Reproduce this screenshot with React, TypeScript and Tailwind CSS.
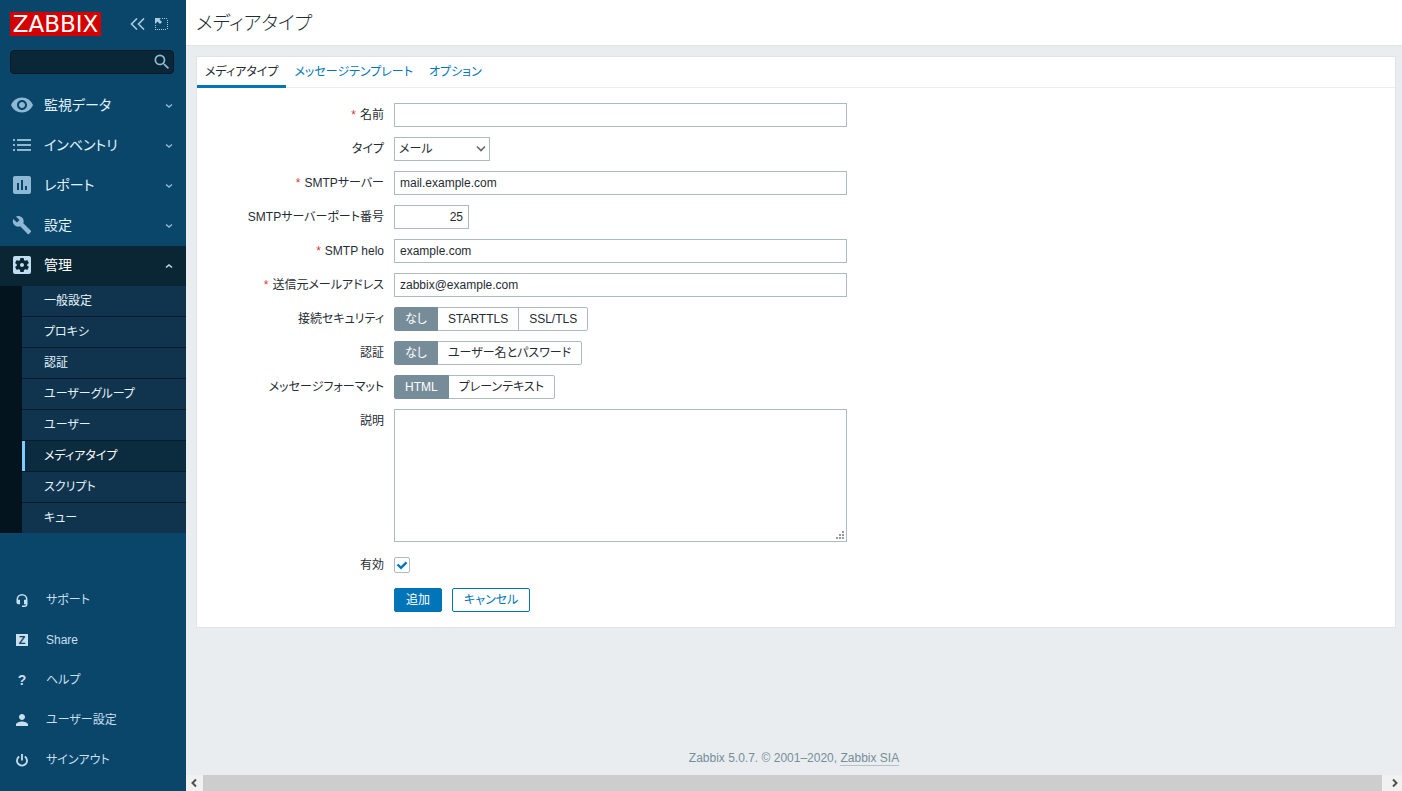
import { useState } from "react";
import type { ReactNode } from "react";
import clsx from "clsx";
import {
  MdAssessment,
  MdBuild,
  MdPerson,
  MdRemoveRedEye,
  MdSearch,
  MdSettingsApplications,
} from "react-icons/md";

const SUBMENU = [
  "一般設定",
  "プロキシ",
  "認証",
  "ユーザーグループ",
  "ユーザー",
  "メディアタイプ",
  "スクリプト",
  "キュー",
];

function ListIcon() {
  return (
    <svg width="18" height="12" viewBox="0 0 18 12" fill="currentColor">
      <path d="M0 0h2v2H0zM4 0h14v2H4zM0 5h2v2H0zM4 5h14v2H4zM0 10h2v2H0zM4 10h14v2H4z" />
    </svg>
  );
}

function HeadsetIcon() {
  return (
    <svg width="12" height="13" viewBox="0 0 12 13" fill="currentColor">
      <path d="M6 0a5.500 5.500 0 0 0-5.500 5.500V8.500A1.800 1.800 0 0 0 2.300 10.300H4V5.800H2V5.500a4 4 0 0 1 8 0v.3H8v4.500h2c-.2.8-.8 1.200-1.500 1.200H6V13h2.500a3 3 0 0 0 3-3V5.500A5.500 5.500 0 0 0 6 0z" />
    </svg>
  );
}

function PowerIcon() {
  return (
    <svg width="12" height="13" viewBox="0 0 12 13" fill="none" stroke="currentColor" strokeWidth="1.8">
      <path d="M6 0v6.500M3.200 2.500a5 5 0 1 0 5.600 0" />
    </svg>
  );
}

function Chevron({ up = false }: { up?: boolean }) {
  return (
    <svg width="8" height="6" viewBox="0 0 8 6" fill="none" stroke="currentColor" strokeWidth="1.5">
      <path d={up ? "M1 4.500 4 2l3 2.500" : "M1 1.500 4 4l3-2.500"} />
    </svg>
  );
}

function MenuItem({ icon, label, open = false }: { icon: ReactNode; label: string; open?: boolean }) {
  return (
    <a
      href="#"
      className={clsx(
        "flex h-10 items-center pr-[13px] pb-0.5 text-sm",
        open ? "bg-[#0a2635] text-white" : "text-[#e3f3fd]",
      )}
    >
      <span className={clsx("flex w-11 justify-center", open ? "text-[#c0dcf0]" : "text-[#8eb8d4]")}>{icon}</span>
      <span className="flex-1">{label}</span>
      <span className={clsx("pt-0.5", open ? "text-[#c0dcf0]" : "text-[#8eb8d4]")}>
        <Chevron up={open} />
      </span>
    </a>
  );
}

function UserItem({ icon, label }: { icon: ReactNode; label: string }) {
  return (
    <a href="#" className="flex h-10 items-center text-[#c8dfee]">
      <span className="flex w-11 justify-center">{icon}</span>
      <span className="pl-0.5">{label}</span>
    </a>
  );
}

function Sidebar() {
  return (
    <aside className="flex w-[186px] shrink-0 flex-col bg-[#0a466a]">
      <div className="flex h-[50px] items-center justify-between pr-[18px] pb-0.5 pl-2.5">
        <a
          href="#"
          className="flex h-6 w-[91px] items-center justify-center bg-[#d40000] font-['DejaVu_Sans',sans-serif] text-[23px] leading-6 text-white"
        >
          ZABBIX
        </a>
        <div className="flex items-center gap-2.5 text-[#a9cce2]">
          <button type="button" aria-label="サイドバーを隠す">
            <svg width="15" height="12" viewBox="0 0 15 12" fill="none" stroke="currentColor" strokeWidth="1.6">
              <path d="M7 .5 1.500 6 7 11.500M14 .5 8.500 6l5.500 5.500" />
            </svg>
          </button>
          <button type="button" aria-label="全画面">
            <svg width="13" height="12" viewBox="0 0 13 12" fill="none" stroke="currentColor">
              <path d="M7 .5h6M12.500 2v10M.5 7v5M2 11.500h10" strokeDasharray="1 1" />
              <path d="M0 0h6L4.500 1.500l2.500 2.500-2 2-2.500-2.500L0 6z" fill="currentColor" stroke="none" />
            </svg>
          </button>
        </div>
      </div>
      <form className="mr-3 ml-2.5 flex h-6 rounded-sm border border-[#06192a] bg-[#0a2737]">
        <input type="text" aria-label="検索" className="min-w-0 flex-1 px-1 text-white outline-none" />
        <button type="button" aria-label="検索する" className="pr-px text-[#8eb8d4]">
          <MdSearch size={20} />
        </button>
      </form>
      <nav className="pt-3">
        <MenuItem icon={<MdRemoveRedEye size={24} />} label="監視データ" />
        <MenuItem icon={<ListIcon />} label="インベントリ" />
        <MenuItem icon={<MdAssessment size={24} />} label="レポート" />
        <MenuItem icon={<MdBuild size={20} />} label="設定" />
        <MenuItem icon={<MdSettingsApplications size={24} />} label="管理" open />
        <div className="bg-[#04141e] pl-[22px]">
          <ul className="bg-[#10344d]">
            {SUBMENU.map((label) => (
              <li key={label} className="border-b border-[#071c2b] last:border-b-0">
                <a
                  href="#"
                  className={clsx(
                    "flex h-[30px] items-center border-l-[3px] pl-[19px]",
                    label === "メディアタイプ"
                      ? "border-[#80ccff] bg-[#0b2b3e] text-white"
                      : "border-transparent text-[#e3f3fd]",
                  )}
                >
                  {label}
                </a>
              </li>
            ))}
          </ul>
        </div>
      </nav>
      <nav className="mt-auto pb-[11px]">
        <UserItem icon={<HeadsetIcon />} label="サポート" />
        <UserItem
          icon={
            <span className="h-3 w-3 bg-[#c8dfee] text-center text-[11px] leading-3 font-bold text-[#0a466a]">Z</span>
          }
          label="Share"
        />
        <UserItem icon={<span className="text-sm font-bold">?</span>} label="ヘルプ" />
        <UserItem icon={<MdPerson size={18} />} label="ユーザー設定" />
        <UserItem icon={<PowerIcon />} label="サインアウト" />
      </nav>
    </aside>
  );
}

function Row({
  label,
  htmlFor,
  required = false,
  children,
}: {
  label: string;
  htmlFor?: string;
  required?: boolean;
  children: ReactNode;
}) {
  return (
    <div className="flex gap-2.5">
      <label htmlFor={htmlFor} className="w-[187px] shrink-0 text-right leading-6">
        {required && <span className="mr-1 text-[#e33734]">*</span>}
        {label}
      </label>
      <div className="flex min-w-0 flex-1">{children}</div>
    </div>
  );
}

function TextField({ id, value = "" }: { id: string; value?: string }) {
  return (
    <input
      id={id}
      type="text"
      defaultValue={value}
      className="h-6 w-full max-w-[453px] border border-[#acbbc2] bg-white px-[5px] outline-none"
    />
  );
}

function Segmented({ name, options }: { name: string; options: string[] }) {
  const [selected, setSelected] = useState(options[0]);

  return (
    <div role="radiogroup" aria-label={name} className="flex h-6">
      {options.map((option) => (
        <label
          key={option}
          className={clsx(
            "relative -ml-px flex items-center border px-2.5 first:ml-0 first:rounded-l-xs last:rounded-r-xs",
            selected === option ? "z-1 border-[#768d99] bg-[#768d99] text-white" : "border-[#acbbc2]",
          )}
        >
          <input
            type="radio"
            name={name}
            checked={selected === option}
            onChange={() => setSelected(option)}
            className="sr-only"
          />
          {option}
        </label>
      ))}
    </div>
  );
}

function MediaTypeForm() {
  return (
    <form className="flex flex-col gap-2.5 py-[15px]">
      <Row label="名前" htmlFor="name" required>
        <TextField id="name" />
      </Row>
      <Row label="タイプ" htmlFor="type">
        <div className="relative">
          <select id="type" className="h-6 w-24 appearance-none border border-[#acbbc2] bg-white pl-1 outline-none">
            <option>メール</option>
          </select>
          <svg
            className="pointer-events-none absolute top-2 right-1"
            width="10"
            height="8"
            viewBox="0 0 10 8"
            fill="none"
            stroke="#666"
            strokeWidth="1.6"
          >
            <path d="M1 1.500 5 5.500l4-4" />
          </svg>
        </div>
      </Row>
      <Row label="SMTPサーバー" htmlFor="smtp_server" required>
        <TextField id="smtp_server" value="mail.example.com" />
      </Row>
      <Row label="SMTPサーバーポート番号" htmlFor="smtp_port">
        <input
          id="smtp_port"
          type="text"
          defaultValue="25"
          className="h-6 w-[75px] border border-[#acbbc2] bg-white px-[5px] text-right outline-none"
        />
      </Row>
      <Row label="SMTP helo" htmlFor="smtp_helo" required>
        <TextField id="smtp_helo" value="example.com" />
      </Row>
      <Row label="送信元メールアドレス" htmlFor="smtp_email" required>
        <TextField id="smtp_email" value="zabbix@example.com" />
      </Row>
      <Row label="接続セキュリティ">
        <Segmented name="smtp_security" options={["なし", "STARTTLS", "SSL/TLS"]} />
      </Row>
      <Row label="認証">
        <Segmented name="smtp_authentication" options={["なし", "ユーザー名とパスワード"]} />
      </Row>
      <Row label="メッセージフォーマット">
        <Segmented name="content_type" options={["HTML", "プレーンテキスト"]} />
      </Row>
      <Row label="説明" htmlFor="description">
        <div className="relative w-full max-w-[453px]">
          <textarea
            id="description"
            className="block h-[133px] w-full resize-none border border-[#acbbc2] bg-white px-[5px] py-1 outline-none"
          />
          <svg
            className="pointer-events-none absolute right-[3px] bottom-[3px]"
            width="8"
            height="8"
            viewBox="0 0 8 8"
            fill="#999"
          >
            <path d="M6 0h2v2H6zM3 3h2v2H3zM6 3h2v2H6zM0 6h2v2H0zM3 6h2v2H3zM6 6h2v2H6z" />
          </svg>
        </div>
      </Row>
      <div className="py-px">
        <Row label="有効" htmlFor="status">
          <div className="relative my-1 h-4 w-4">
            <input
              id="status"
              type="checkbox"
              defaultChecked
              className="peer block h-4 w-4 appearance-none rounded-xs border border-[#acbbc2] bg-white"
            />
            <svg
              className="pointer-events-none absolute inset-0 hidden peer-checked:block"
              width="16"
              height="16"
              viewBox="0 0 16 16"
              fill="none"
              stroke="#0275b8"
              strokeWidth="2.400"
            >
              <path d="M3.500 7.500 7 10.800l5.500-5.500" />
            </svg>
          </div>
        </Row>
      </div>
      <div className="flex gap-2.5 pl-[197px]">
        <button type="submit" className="h-6 rounded-xs border border-[#0275b8] bg-[#0275b8] px-[11px] text-white">
          追加
        </button>
        <button type="button" className="h-6 rounded-xs border border-[#0275b8] bg-white px-[11px] text-[#0275b8]">
          キャンセル
        </button>
      </div>
    </form>
  );
}

function ScrollBar() {
  return (
    <div className="flex h-4 items-center justify-between bg-[#f1f1f1] text-[#505050]">
      <svg width="17" height="16" viewBox="0 0 17 16" fill="none" stroke="currentColor" strokeWidth="2">
        <path d="M10 4.500 6.500 8l3.500 3.500" />
      </svg>
      <div className="h-full flex-1 bg-[#cdcdcd]" />
      <svg width="20" height="16" viewBox="0 0 20 16" fill="none" stroke="currentColor" strokeWidth="2">
        <path d="m11 4.500 3.500 3.500-3.500 3.500" />
      </svg>
    </div>
  );
}

export default function App() {
  return (
    <div className="flex min-h-screen bg-[#e9edf0] font-['Liberation_Sans','Noto_Sans_CJK_JP',sans-serif] text-xs text-[#1f2c33] [font-feature-settings:'palt']">
      <Sidebar />
      <div className="flex min-w-0 flex-1 flex-col">
        <header className="flex h-[46px] items-center border-b border-[#dfe4e7] bg-white px-2.5 pt-0.5">
          <h1 className="font-['Liberation_Sans','Noto_Sans_CJK_JP_Light','Noto_Sans_CJK_JP',sans-serif] text-[19px] font-light">
            メディアタイプ
          </h1>
        </header>
        <main className="px-2.5 pt-2.5 pr-1.5">
          <div className="border border-[#dfe4e7] bg-white">
            <nav className="flex h-[31px] border-b border-[#ebeef0]">
              <a href="#" className="h-[31px] border-b-[3px] border-[#0275b8] px-2 leading-[30px]">
                メディアタイプ
              </a>
              <a href="#" className="px-2 leading-[30px] text-[#0275b8]">
                メッセージテンプレート
              </a>
              <a href="#" className="px-2 leading-[30px] text-[#0275b8]">
                オプション
              </a>
            </nav>
            <MediaTypeForm />
          </div>
        </main>
        <footer className="mt-auto pb-[9px] text-center text-[#768d99]">
          Zabbix 5.0.7. © 2001–2020,{" "}
          <a href="#" className="border-b border-[#b5c1c8]">
            Zabbix SIA
          </a>
        </footer>
        <ScrollBar />
      </div>
    </div>
  );
}
